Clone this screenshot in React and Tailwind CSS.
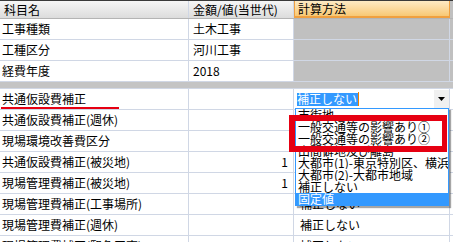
import React from 'react';

const RED = 'border-[#e60012]';

const rowsTop = [
  { name: '工事種類', value: '土木工事' },
  { name: '工種区分', value: '河川工事' },
  { name: '経費年度', value: '2018' },
];

const rowsBottom = [
  { name: '共通仮設費補正(週休)', value: '', method: '' },
  { name: '現場環境改善費区分', value: '', method: '' },
  { name: '共通仮設費補正(被災地)', value: '1', method: '' },
  { name: '現場管理費補正(被災地)', value: '1', method: '' },
  { name: '現場管理費補正(工事場所)', value: '', method: '補正しない' },
  { name: '現場管理費補正(週休)', value: '', method: '補正しない' },
  { name: '現場管理費補正(緊急工事)', value: '', method: '補正しない' },
];

const options = [
  '市街地',
  '一般交通等の影響あり①',
  '一般交通等の影響あり②',
  '山間僻地及び離島',
  '大都市(1)-東京特別区、横浜市、大阪市',
  '大都市(2)-大都市地域',
  '補正しない',
  '固定値',
];

function Cell({ className = '', children }) {
  return (
    <div className={`flex h-full shrink-0 items-center overflow-hidden whitespace-nowrap border-r border-[#d0d7e5] ${className}`}>
      {children}
    </div>
  );
}

function Row({ children, className = '' }) {
  return <div className={`flex h-[21px] border-b border-[#d0d7e5] ${className}`}>{children}</div>;
}

export default function App() {
  return (
    <div className="relative h-[242px] w-[453px] overflow-hidden bg-white font-['Noto_Sans_CJK_JP',sans-serif] text-[12px] leading-none text-black">
      {/* ヘッダー */}
      <div className="flex h-[19px] border-t border-b border-t-[#3a3a3a] border-b-[#b4b4b4]">
        <Cell className="w-[189px] bg-gradient-to-b from-[#f6f6f6] to-[#dcdcdc] pl-[4px] border-[#b4b4b4]">科目名</Cell>
        <Cell className="w-[105px] bg-gradient-to-b from-[#f6f6f6] to-[#dcdcdc] pl-[4px] border-[#b4b4b4]">金額/値(当世代)</Cell>
        <Cell className="w-[156px] border-l border-[#f0a040] bg-gradient-to-b from-[#fdeac4] to-[#f8c874] pl-[3px] border-b-2">計算方法</Cell>
        <div className="flex-1 bg-[#c0c0c0]" />
      </div>

      {rowsTop.map((r) => (
        <Row key={r.name}>
          <Cell className="w-[189px] pl-[2px]">{r.name}</Cell>
          <Cell className="w-[105px] pl-[4px]">{r.value}</Cell>
          <Cell className="w-[156px] bg-[#c0c0c0]" />
          <div className="flex-1 bg-[#c0c0c0]" />
        </Row>
      ))}

      <div className="flex h-[7px] border-b border-[#d0d7e5] bg-[#c4c4c4]" />

      {/* 共通仮設費補正 */}
      <Row>
        <Cell className="relative w-[189px] pl-[2px]">
          共通仮設費補正
          <div className="absolute left-[1px] top-[18px] h-[3px] w-[118px] bg-[#e60012]" />
        </Cell>
        <Cell className="w-[105px]" />
        <Cell className="w-[156px] pl-[3px]">
          <div className="flex h-full flex-1 items-center">
            <span className="flex h-[13px] items-center bg-[#3399ff] pr-[1px] text-white">補正しない</span>
            <span className="h-[14px] w-[1px] bg-[#f08000]" />
          </div>
          <div className="flex h-[19px] w-[15px] items-center justify-center bg-[#f0f0f0]">
            <svg width="7" height="4" viewBox="0 0 7 4"><path d="M0 0h7L3.5 4z" fill="#000" /></svg>
          </div>
        </Cell>
        <div className="flex-1" />
      </Row>

      {rowsBottom.map((r) => (
        <Row key={r.name}>
          <Cell className="w-[189px] pl-[2px]">{r.name}</Cell>
          <Cell className="w-[105px] justify-end pr-[5px]">{r.value}</Cell>
          <Cell className="w-[156px] pl-[6px]">{r.method}</Cell>
          <div className="flex-1" />
        </Row>
      ))}

      {/* ドロップダウン */}
      <div className="absolute left-[295px] top-[108px] w-[154px] border border-[#3399ff] bg-white shadow-[2px_2px_1px_rgba(0,0,0,0.35)]">
        {options.map((o, i) => (
          <div
            key={o}
            className={`flex h-[12px] items-center overflow-hidden whitespace-nowrap pl-[2px] ${i === options.length - 1 ? 'bg-[#3399ff] text-white' : ''}`}
          >
            {o}
          </div>
        ))}
      </div>

      {/* 赤枠 */}
      <div className={`absolute left-[289px] top-[115px] h-[37px] w-[158px] border-[6px] border-r-[5px] ${RED}`} />
    </div>
  );
}
